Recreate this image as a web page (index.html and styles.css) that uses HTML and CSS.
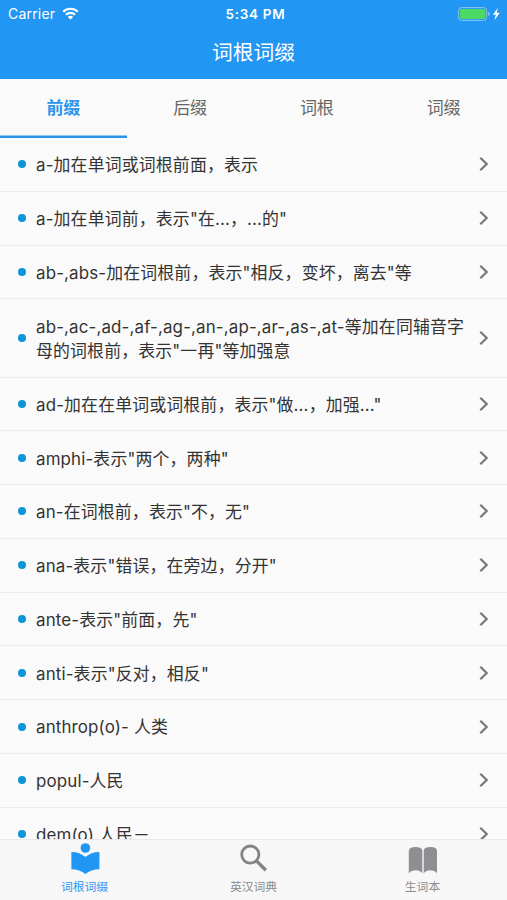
FILE: index.html
```html
<!DOCTYPE html>
<html lang="zh-CN">
<head>
    <meta charset="UTF-8">
    <meta name="viewport" content="width=device-width, initial-scale=1.0">
    <title>词根词缀</title>
    <link rel="stylesheet" href="styles.css">
</head>
<body>
    <div class="app">
        <header class="header">
            <div class="status-bar">
                <div class="carrier">
                    <span>Carrier</span>
                    <svg class="wifi" viewBox="0 0 17 13">
                        <path d="M1.2 4.8a10.4 10.4 0 0 1 14.6 0M3.9 7.7a6.6 6.6 0 0 1 9.2 0" fill="none" stroke="#fff" stroke-width="2.1"/>
                        <path d="M8.5 12.6 5.8 9.9a4 4 0 0 1 5.4 0z" fill="#fff"/>
                    </svg>
                </div>
                <div class="time">5:34 PM</div>
                <div class="battery">
                    <svg width="43" height="14" viewBox="0 0 43 14">
                        <rect x=".6" y=".6" width="28" height="12.8" rx="3" fill="none" stroke="#8bc6f7"/>
                        <rect x="2" y="2" width="25.2" height="10" rx="1.5" fill="#4cd964"/>
                        <path d="M30.2 4.8q1.6.6 1.6 2.2t-1.6 2.2z" fill="#8bc6f7"/>
                        <path d="M40 .8 34.8 7.8h3l-1.4 5.4 5.4-7.4h-3.2z" fill="#fff"/>
                    </svg>
                </div>
            </div>
            <h1 class="title">词根词缀</h1>
        </header>

        <nav class="tabs">
            <a class="tab active">前缀</a>
            <a class="tab">后缀</a>
            <a class="tab">词根</a>
            <a class="tab">词缀</a>
        </nav>

        <ul class="list">
            <li class="item"><span class="dot"></span><span class="text">a-加在单词或词根前面，表示</span><svg class="arrow" viewBox="0 0 10 16"><path d="M1.3 1.7 7.7 8l-6.4 6.3"/></svg></li>
            <li class="item"><span class="dot"></span><span class="text">a-加在单词前，表示"在...，...的"</span><svg class="arrow" viewBox="0 0 10 16"><path d="M1.3 1.7 7.7 8l-6.4 6.3"/></svg></li>
            <li class="item"><span class="dot"></span><span class="text">ab-,abs-加在词根前，表示"相反，变坏，离去"等</span><svg class="arrow" viewBox="0 0 10 16"><path d="M1.3 1.7 7.7 8l-6.4 6.3"/></svg></li>
            <li class="item"><span class="dot"></span><span class="text">ab-,ac-,ad-,af-,ag-,an-,ap-,ar-,as-,at-等加在同辅音字<br>母的词根前，表示"一再"等加强意</span><svg class="arrow" viewBox="0 0 10 16"><path d="M1.3 1.7 7.7 8l-6.4 6.3"/></svg></li>
            <li class="item"><span class="dot"></span><span class="text">ad-加在在单词或词根前，表示"做...，加强..."</span><svg class="arrow" viewBox="0 0 10 16"><path d="M1.3 1.7 7.7 8l-6.4 6.3"/></svg></li>
            <li class="item"><span class="dot"></span><span class="text">amphi-表示"两个，两种"</span><svg class="arrow" viewBox="0 0 10 16"><path d="M1.3 1.7 7.7 8l-6.4 6.3"/></svg></li>
            <li class="item"><span class="dot"></span><span class="text">an-在词根前，表示"不，无"</span><svg class="arrow" viewBox="0 0 10 16"><path d="M1.3 1.7 7.7 8l-6.4 6.3"/></svg></li>
            <li class="item"><span class="dot"></span><span class="text">ana-表示"错误，在旁边，分开"</span><svg class="arrow" viewBox="0 0 10 16"><path d="M1.3 1.7 7.7 8l-6.4 6.3"/></svg></li>
            <li class="item"><span class="dot"></span><span class="text">ante-表示"前面，先"</span><svg class="arrow" viewBox="0 0 10 16"><path d="M1.3 1.7 7.7 8l-6.4 6.3"/></svg></li>
            <li class="item"><span class="dot"></span><span class="text">anti-表示"反对，相反"</span><svg class="arrow" viewBox="0 0 10 16"><path d="M1.3 1.7 7.7 8l-6.4 6.3"/></svg></li>
            <li class="item"><span class="dot"></span><span class="text">anthrop(o)- 人类</span><svg class="arrow" viewBox="0 0 10 16"><path d="M1.3 1.7 7.7 8l-6.4 6.3"/></svg></li>
            <li class="item"><span class="dot"></span><span class="text">popul-人民</span><svg class="arrow" viewBox="0 0 10 16"><path d="M1.3 1.7 7.7 8l-6.4 6.3"/></svg></li>
            <li class="item"><span class="dot"></span><span class="text">dem(o) 人民－</span><svg class="arrow" viewBox="0 0 10 16"><path d="M1.3 1.7 7.7 8l-6.4 6.3"/></svg></li>
        </ul>

        <footer class="bottom-nav">
            <a class="nav-item active">
                <svg class="nav-icon" viewBox="0 0 32 34">
                    <circle cx="16.4" cy="6" r="4.8"/>
                    <path d="M16.4 15.1C12.7 11.9 7.9 10 2.400 10V27.200c5.500 0 10.300 1.500 14 4.800 3.700-3.300 8.500-4.800 14-4.800V10c-5.500 0-10.300 1.900-14 5.100z"/>
                </svg>
                <span>词根词缀</span>
            </a>
            <a class="nav-item">
                <svg class="nav-icon" viewBox="0 0 32 34">
                    <g fill="none" stroke="#848484">
                        <circle cx="12.3" cy="12.6" r="8.6" stroke-width="2.8"/>
                        <path d="M18.5 18.900 27.800 28.200" stroke-width="3.4"/>
                    </g>
                </svg>
                <span>英汉词典</span>
            </a>
            <a class="nav-item">
                <svg class="nav-icon" viewBox="0 0 32 34">
                    <path d="M1.800 31.300V9Q2 4.900 8.500 4.900T15.300 8.600V31.300Q13 28.200 8.600 28.200T1.800 31.300zM16.700 31.300V8.600Q17 4.900 23.500 4.900T30 9V31.300Q27.800 28.200 23.400 28.200T16.700 31.300z"/>
                </svg>
                <span>生词本</span>
            </a>
        </footer>
    </div>
</body>
</html>
```
FILE: styles.css
```css
* { box-sizing: border-box; }
body {
    margin: 0;
    background-color: #fafafa;
    color: #333;
    font-family: Inter, "Noto Sans CJK SC", sans-serif;
}
.app { display: flex; flex-direction: column; height: 900px; overflow: hidden; }

.header { flex: none; height: 79px; background-color: #2196f3; color: #fff; }
.status-bar {
    display: grid;
    grid-template-columns: 1fr auto 1fr;
    align-items: center;
    height: 27px;
    padding: 0 6px 0 8px;
    font-size: 14px;
}
.carrier { display: flex; align-items: center; gap: 7px; letter-spacing: 0.2px; }
.wifi { width: 17px; height: 13px; }
.time { font-weight: 600; font-size: 13.5px; letter-spacing: 0.7px; padding-left: 2px; }
.battery { display: flex; justify-content: flex-end; }
.title { margin: 0; text-align: center; font-size: 20.7px; font-weight: 400; line-height: 52px; }

.tabs { flex: none; display: flex; height: 59px; }
.tab {
    flex: 1;
    padding-top: 1px;
    text-align: center;
    font-size: 17px;
    line-height: 56px;
    color: #666;
}
.tab.active { color: #2b95e9; font-weight: 700; box-shadow: inset 0 -2.5px #2b95e9; }

.list { flex: 1; min-height: 0; overflow: hidden; margin: 0; padding: 0; list-style: none; }
.item {
    display: flex;
    align-items: center;
    padding: 14.2px 18px;
    border-bottom: 1px solid #ebebeb;
}
.dot { flex: none; width: 8px; height: 8px; margin-right: 10px; border-radius: 50%; background-color: #0e94d8; }
/* 1px down so the glyphs sit level with the dot */
.text {
    flex: 1;
    margin: 1px 0 -1px;
    font-size: 16.9px;
    line-height: 24.4px;
    letter-spacing: 0.15px;
    white-space: nowrap;
}
.arrow { flex: none; width: 10px; height: 16px; fill: none; stroke: #777; stroke-width: 2.2; }

.bottom-nav {
    flex: none;
    display: flex;
    height: 61px;
    border-top: 1px solid #e9e9e9;
    background-color: #f7f7f7;
}
.nav-item {
    flex: 1;
    display: flex;
    flex-direction: column;
    align-items: center;
    padding-top: 2px;
    font-size: 11.8px;
    line-height: 23px;
    color: #8c8c8c;
    fill: #8e8e93;
}
.nav-item.active { color: #2b98f0; fill: #2196f3; }
.nav-icon { width: 32px; height: 34px; }
```
